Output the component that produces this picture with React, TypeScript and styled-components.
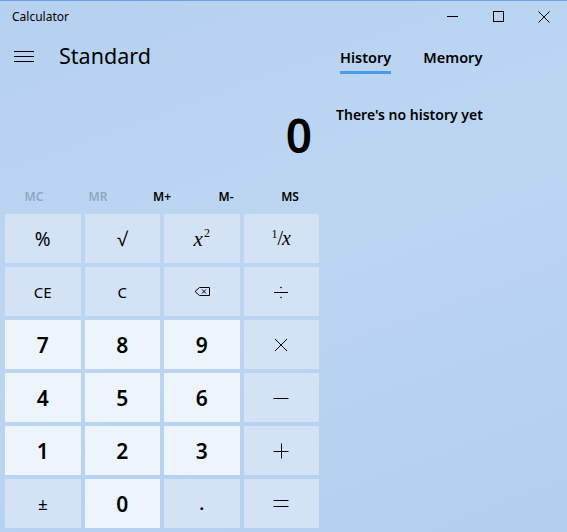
import React from "react";
import styled, { createGlobalStyle } from "styled-components";

const Global = createGlobalStyle`
  html, body { margin: 0; padding: 0; }
  body { font-family: "Noto Sans", "Open Sans", sans-serif; color: #000; }
`;

const Window = styled.div`
  width: 567px;
  height: 532px;
  box-sizing: border-box;
  border-top: 1px solid #6aa3ea;
  background: linear-gradient(160deg, #b6d1f0 0%, #bcd6f2 45%, #b8d3f1 70%, #b2cff0 100%);
  display: flex;
  flex-direction: column;
  overflow: hidden;
`;

const TitleBar = styled.div`
  height: 31px;
  display: flex;
  align-items: center;
  padding-left: 12px;
`;

const TitleText = styled.div`
  font-size: 12px;
  flex: 1;
  margin-top: -1px;
`;

const WinBtn = styled.div`
  width: 46px;
  height: 31px;
  display: flex;
  align-items: center;
  justify-content: center;
`;

const Body = styled.div`
  flex: 1;
  display: flex;
`;

const LeftCol = styled.div`
  width: 324px;
  display: flex;
  flex-direction: column;
`;

const Header = styled.div`
  height: 48px;
  display: flex;
  align-items: center;
  padding-left: 14px;
`;

const Hamburger = styled.div`
  width: 20px;
  display: flex;
  flex-direction: column;
  gap: 4px;
  margin-right: 25px;
  span {
    display: block;
    height: 1px;
    background: #000;
  }
`;

const ModeTitle = styled.div`
  font-size: 21.5px;
  margin-top: -2px;
`;

const Display = styled.div`
  height: 103px;
  display: flex;
  align-items: center;
  justify-content: flex-end;
  padding-right: 12px;
  font-size: 46px;
  font-weight: 600;
  padding-top: 6px;
  box-sizing: border-box;
`;

const MemoryRow = styled.div`
  height: 27px;
  display: grid;
  grid-template-columns: repeat(5, 64px);
  padding-left: 2px;
  margin-bottom: 4px;
`;

const MemBtn = styled.div<{ $disabled?: boolean }>`
  display: flex;
  align-items: center;
  justify-content: center;
  font-size: 12px;
  font-weight: 600;
  color: ${(p) => (p.$disabled ? "#90a7c2" : "#000")};
`;

const Keypad = styled.div`
  padding: 0 5px;
  display: grid;
  grid-template-columns: repeat(4, 1fr);
  grid-auto-rows: 49px;
  gap: 4px;
`;

const Key = styled.div<{ $num?: boolean }>`
  background: ${(p) => (p.$num ? "#eef4fc" : "#d3e3f5")};
  display: flex;
  align-items: center;
  justify-content: center;
  font-size: ${(p) => (p.$num ? "21px" : "15px")};
  font-weight: ${(p) => (p.$num ? 600 : 400)};
  color: #000;
`;

const Glyph = styled.span<{ $size: number; $shift?: number; $weight?: number }>`
  font-size: ${(p) => p.$size}px;
  font-weight: ${(p) => p.$weight ?? 400};
  margin-top: ${(p) => p.$shift ?? 0}px;
`;

const MathText = styled.span`
  font-family: "Liberation Serif", "DejaVu Serif", serif;
  font-style: italic;
  font-size: 21px;
  sup {
    font-size: 12px;
    font-style: normal;
    vertical-align: 9px;
    margin-left: 1px;
  }
`;

const RecipText = styled.span`
  font-family: "Liberation Serif", "DejaVu Serif", serif;
  font-size: 20px;
  sup {
    font-size: 12px;
    vertical-align: 7px;
  }
  i { margin-left: -1px; }
`;

const RightCol = styled.div`
  flex: 1;
  display: flex;
  flex-direction: column;
  align-items: flex-start;
  padding-left: 12px;
`;

const Tabs = styled.div`
  display: flex;
  gap: 32px;
  padding: 15px 0 0 4px;
`;

const Tab = styled.div<{ $active?: boolean }>`
  font-size: 14.5px;
  line-height: 20px;
  font-weight: 600;
  padding-bottom: 4px;
  border-bottom: 3px solid ${(p) => (p.$active ? "#4a9bf0" : "transparent")};
`;

const Empty = styled.div`
  margin-top: 31px;
  font-size: 14px;
  line-height: 20px;
  font-weight: 600;
`;

const Icon = ({ children, w = 16, h = 16 }: { children: React.ReactNode; w?: number; h?: number }) => (
  <svg width={w} height={h} viewBox={`0 0 ${w} ${h}`} fill="none" stroke="#000" strokeWidth={1}>
    {children}
  </svg>
);

const keys: { label: React.ReactNode; num?: boolean }[] = [
  { label: <Glyph $size={19}>%</Glyph> },
  { label: <Glyph $size={19}>√</Glyph> },
  { label: <MathText>x<sup>2</sup></MathText> },
  { label: <RecipText><sup>1</sup>/<i>x</i></RecipText> },
  { label: <Glyph $size={15}>CE</Glyph> },
  { label: <Glyph $size={15}>C</Glyph> },
  {
    label: (
      <Icon w={16} h={11}>
        <path d="M5.5 1.5 H15.5 V9.5 H5.5 L1 5.5 Z" />
        <path d="M8 3.5 L12 7.5 M12 3.5 L8 7.5" />
      </Icon>
    ),
  },
  {
    label: (
      <Icon w={16} h={14}>
        <path d="M1 7.5 H15" />
        <circle cx="8" cy="2.5" r="0.8" fill="#000" stroke="none" />
        <circle cx="8" cy="12.5" r="0.8" fill="#000" stroke="none" />
      </Icon>
    ),
  },
  { label: "7", num: true },
  { label: "8", num: true },
  { label: "9", num: true },
  {
    label: (
      <Icon w={14} h={14}>
        <path d="M1 1 L13 13 M13 1 L1 13" />
      </Icon>
    ),
  },
  { label: "4", num: true },
  { label: "5", num: true },
  { label: "6", num: true },
  {
    label: (
      <Icon w={16} h={4}>
        <path d="M0.5 2.5 H15.5" />
      </Icon>
    ),
  },
  { label: "1", num: true },
  { label: "2", num: true },
  { label: "3", num: true },
  {
    label: (
      <Icon w={16} h={16}>
        <path d="M0.5 8.5 H15.5 M8.5 0.5 V15.5" />
      </Icon>
    ),
  },
  { label: <Glyph $size={17}>±</Glyph> },
  { label: "0", num: true },
  { label: <Glyph $size={18} $weight={600} $shift={-2}>.</Glyph> },
  {
    label: (
      <Icon w={16} h={9}>
        <path d="M0.5 1.5 H15.5 M0.5 7.5 H15.5" />
      </Icon>
    ),
  },
];

export default function App() {
  return (
    <>
      <Global />
      <Window>
        <TitleBar>
          <TitleText>Calculator</TitleText>
          <WinBtn>
            <Icon w={11} h={3}>
              <path d="M0 1.5 H11" />
            </Icon>
          </WinBtn>
          <WinBtn>
            <Icon w={11} h={11}>
              <rect x="0.5" y="0.5" width="10" height="10" />
            </Icon>
          </WinBtn>
          <WinBtn>
            <Icon w={12} h={12}>
              <path d="M0.5 0.5 L11.5 11.5 M11.5 0.5 L0.5 11.5" />
            </Icon>
          </WinBtn>
        </TitleBar>
        <Body>
          <LeftCol>
            <Header>
              <Hamburger>
                <span />
                <span />
                <span />
              </Hamburger>
              <ModeTitle>Standard</ModeTitle>
            </Header>
            <Display>0</Display>
            <MemoryRow>
              <MemBtn $disabled>MC</MemBtn>
              <MemBtn $disabled>MR</MemBtn>
              <MemBtn>M+</MemBtn>
              <MemBtn>M-</MemBtn>
              <MemBtn>MS</MemBtn>
            </MemoryRow>
            <Keypad>
              {keys.map((k, i) => (
                <Key key={i} $num={k.num}>
                  {k.label}
                </Key>
              ))}
            </Keypad>
          </LeftCol>
          <RightCol>
            <Tabs>
              <Tab $active>History</Tab>
              <Tab>Memory</Tab>
            </Tabs>
            <Empty>There's no history yet</Empty>
          </RightCol>
        </Body>
      </Window>
    </>
  );
}
